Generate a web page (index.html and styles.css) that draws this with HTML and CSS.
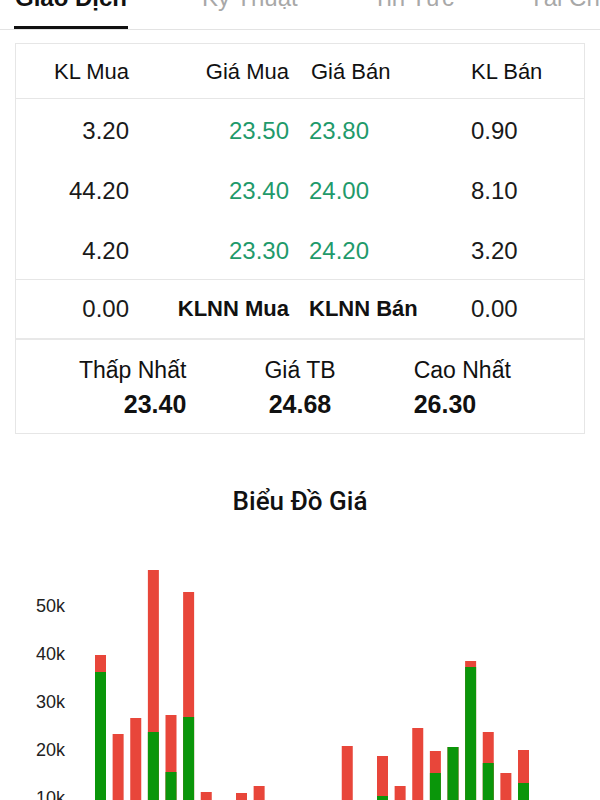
FILE: index.html
```html
<!DOCTYPE html>
<html lang="vi">
<head>
    <meta charset="UTF-8">
    <meta name="viewport" content="width=device-width, initial-scale=1.0">
    <title>Giao Dịch</title>
    <link rel="stylesheet" href="styles.css">
</head>
<body>

    <!-- Tabs -->
    <div class="tabs">
        <span class="tab active">Giao Dịch</span>
        <span class="tab">Kỹ Thuật</span>
        <span class="tab">Tin Tức</span>
        <span class="tab">Tài Chính</span>
    </div>

    <!-- Bảng giá -->
    <div class="card">
        <div class="row head">
            <span class="c1">KL Mua</span>
            <span class="c2">Giá Mua</span>
            <span class="c3">Giá Bán</span>
            <span class="c4">KL Bán</span>
        </div>
        <div class="book">
            <div class="row">
                <span class="c1 num">3.20</span>
                <span class="c2 num up">23.50</span>
                <span class="c3 num up">23.80</span>
                <span class="c4 num">0.90</span>
            </div>
            <div class="row">
                <span class="c1 num">44.20</span>
                <span class="c2 num up">23.40</span>
                <span class="c3 num up">24.00</span>
                <span class="c4 num">8.10</span>
            </div>
            <div class="row">
                <span class="c1 num">4.20</span>
                <span class="c2 num up">23.30</span>
                <span class="c3 num up">24.20</span>
                <span class="c4 num">3.20</span>
            </div>
        </div>
        <div class="row foreign">
            <span class="c1 num">0.00</span>
            <span class="c2 label">KLNN Mua</span>
            <span class="c3 label">KLNN Bán</span>
            <span class="c4 num">0.00</span>
        </div>
        <div class="stats">
            <div class="stat left">
                <div class="stat-name">Thấp Nhất</div>
                <div class="stat-value">23.40</div>
            </div>
            <div class="stat">
                <div class="stat-name">Giá TB</div>
                <div class="stat-value">24.68</div>
            </div>
            <div class="stat right">
                <div class="stat-name">Cao Nhất</div>
                <div class="stat-value">26.30</div>
            </div>
        </div>
    </div>

    <!-- Biểu đồ -->
    <h2 class="chart-title">Biểu Đồ Giá</h2>
    <svg class="chart" width="600" height="330" viewBox="0 0 600 330">
        <g class="axis">
            <text x="65" y="72.5">50k</text>
            <text x="65" y="120.5">40k</text>
            <text x="65" y="168.5">30k</text>
            <text x="65" y="216.5">20k</text>
            <text x="65" y="264.5">10k</text>
        </g>
        <g id="bars"></g>
    </svg>

    <script>
        // [index, tong KL, KL mua] - 0 o y=306, 4.8px / 1k
        const bars = [
            [0, 190, 173], [1, 111, 0], [2, 127, 0], [3, 275, 113], [4, 130, 73],
            [5, 253, 128], [6, 53, 0], [7, 30, 10], [8, 52, 0], [9, 59, 0],
            [10, 20, 0], [11, 14, 6], [12, 25, 0], [13, 18, 0],
            [14, 99, 0], [15, 22, 10], [16, 89, 49], [17, 59, 0], [18, 117, 0],
            [19, 94, 72], [20, 98, 98], [21, 184, 178], [22, 113, 82],
            [23, 72, 0], [24, 95, 62]
        ];
        const g = document.getElementById("bars");
        const ns = "http://www.w3.org/2000/svg";
        bars.forEach(([i, total, buy]) => {
            const x = 95 + 17.625 * i;
            const red = document.createElementNS(ns, "rect");
            red.setAttribute("class", "sell");
            red.setAttribute("x", x);
            red.setAttribute("y", 306 - total);
            red.setAttribute("width", 11);
            red.setAttribute("height", total);
            g.appendChild(red);
            if (buy > 0) {
                const green = document.createElementNS(ns, "rect");
                green.setAttribute("class", "buy");
                green.setAttribute("x", x);
                green.setAttribute("y", 306 - buy);
                green.setAttribute("width", 11);
                green.setAttribute("height", buy);
                g.appendChild(green);
            }
        });
    </script>

</body>
</html>
```

FILE: styles.css
```css
body {
    font-family: "Liberation Sans", Arial, sans-serif;
    margin: 0;
    color: #111;
    background: #fff;
    overflow-x: hidden;
}

/* Tabs */
.tabs {
    display: flex;
    gap: 73px;
    margin-top: -16px;
    padding-left: 14px;
    white-space: nowrap;
    overflow: hidden;
    border-bottom: 1px solid #e3e3e3;
}
.tab {
    font-size: 24px;
    line-height: 28px;
    padding: 0 1px 14px;
    border-bottom: 3px solid transparent;
    color: #a8a8a8;
}
.tab.active {
    color: #111;
    font-weight: bold;
    border-bottom-color: #111;
}

/* Card */
.card {
    margin: 13px 15px 0;
    border: 1px solid #e6e6e6;
}
.row {
    display: grid;
    grid-template-columns: repeat(4, 1fr);
    align-items: center;
    height: 60px;
    font-size: 22px;
}
.row.head {
    height: 55px;
    padding-top: 2px;
    box-sizing: border-box;
    border-bottom: 1px solid #e6e6e6;
}
.book {
    border-bottom: 1px solid #e6e6e6;
}
.book .row {
    padding-top: 3px;
    box-sizing: border-box;
}
.row.foreign {
    height: 58px;
    border-bottom: 2px solid #e8e8e8;
}
.c1 { text-align: right; padding-right: 29px; }
.c2 { text-align: right; padding-right: 11px; }
.c3 { text-align: left; padding-left: 9px; }
.c4 { text-align: left; padding-left: 29px; }
.num {
    font-size: 24px;
    color: #1a1a1a;
}
.num.up {
    color: #1f9a6b;
}
.label {
    font-weight: bold;
}
.head .c3 { padding-left: 11px; }

/* Thong ke */
.stats {
    display: grid;
    grid-template-columns: repeat(3, 1fr);
    padding: 16px 0 12px;
}
.stat {
    text-align: center;
}
.stat.left {
    text-align: right;
    padding-right: 19px;
}
.stat.right {
    text-align: left;
    padding-left: 19px;
}
.stat-name {
    font-size: 23px;
    line-height: 28px;
}
.stat-value {
    font-size: 25px;
    line-height: 34px;
    font-weight: bold;
    margin-top: 3px;
}

/* Bieu do */
.chart-title {
    font-family: Roboto, "Liberation Sans", sans-serif;
    font-size: 26px;
    font-weight: 500;
    line-height: 30px;
    text-align: center;
    margin: 52px 0 23px;
}
.chart {
    display: block;
}
.axis text {
    font-family: "Liberation Sans", Arial, sans-serif;
    font-size: 18px;
    fill: #222;
    text-anchor: end;
}
.sell {
    fill: #e8463a;
}
.buy {
    fill: #0a960a;
}
```
